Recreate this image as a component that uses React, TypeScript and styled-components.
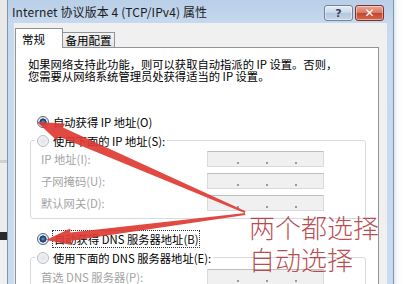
import React from "react";
import styled, { createGlobalStyle } from "styled-components";

const Global = createGlobalStyle`
  html, body { margin: 0; padding: 0; background: #ffffff; }
  body { width: 403px; height: 284px; overflow: hidden; }
`;

const UI_FONT = `"Noto Sans CJK SC", "Noto Sans", sans-serif`;

const Screen = styled.div`
  position: relative;
  width: 403px;
  height: 284px;
  overflow: hidden;
  display: flex;
  font-family: ${UI_FONT};
`;

const DesktopEdge = styled.div<{ $side: "left" | "right" }>`
  flex: none;
  width: ${(p) => (p.$side === "left" ? 7 : 9)}px;
  background: ${(p) =>
    p.$side === "left"
      ? "linear-gradient(#e9e9e9 0 160px, #cfcfcf 160px 163px, #ececec 163px 232px, #2a2a2a 232px 240px, #f0f0f0 240px)"
      : "linear-gradient(90deg, #dfe6ee, #f8fafc 3px, #ffffff)"};
`;

const Window = styled.div`
  flex: none;
  width: 387px;
  box-sizing: border-box;
  display: flex;
  flex-direction: column;
  background: linear-gradient(#b9cfe8, #c7d9ee 24px, #c9dbef);
  border-left: 1px solid #7f95ae;
  border-right: 1px solid #7f95ae;
`;

const TitleBar = styled.div`
  flex: none;
  height: 23px;
  display: flex;
  align-items: center;
  padding: 0 9px 0 4px;
`;

const Title = styled.span`
  font-size: 12px;
  color: #1b1b1b;
  white-space: nowrap;
  letter-spacing: 0.1px;
`;

const CaptionButtons = styled.div`
  margin-left: auto;
  display: flex;
  gap: 2px;
  align-self: flex-start;
  margin-top: 5px;
`;

const CaptionButton = styled.div<{ $kind: "help" | "close" }>`
  width: 29px;
  height: 16px;
  box-sizing: border-box;
  border-radius: 3px;
  display: flex;
  align-items: center;
  justify-content: center;
  font-family: "DejaVu Sans", sans-serif;
  font-weight: bold;
  font-size: ${(p) => (p.$kind === "help" ? 11 : 12)}px;
  line-height: 1;
  border: 1px solid ${(p) => (p.$kind === "help" ? "#70839c" : "#7d3024")};
  color: ${(p) => (p.$kind === "help" ? "#2d4463" : "#ffffff")};
  background: ${(p) =>
    p.$kind === "help"
      ? "linear-gradient(#e6eef7, #c9d7e7 50%, #b4c6dc 51%, #c6d6e8)"
      : "linear-gradient(#eaa692, #d77763 50%, #c2442d 51%, #d4694f)"};
  box-shadow: inset 0 0 0 1px rgba(255, 255, 255, 0.45);
`;

const Client = styled.div`
  flex: 1;
  min-height: 0;
  margin: 0 6px;
  background: #f0f0f0;
  padding: 5px 8px 0 1px;
  display: flex;
  flex-direction: column;
`;

const TabRow = styled.div`
  flex: none;
  height: 20px;
  display: flex;
  align-items: flex-end;
  position: relative;
  z-index: 1;
`;

const Tab = styled.div<{ $active?: boolean }>`
  box-sizing: border-box;
  display: flex;
  align-items: center;
  font-size: 11.5px;
  color: #000;
  white-space: nowrap;
  border: 1px solid #8e9299;
  border-bottom: none;
  ${(p) =>
    p.$active
      ? `width: 48px; height: 20px; padding-left: 6px; background: #ffffff;`
      : `width: 53px; height: 15px; margin-bottom: 1px; margin-left: -1px; justify-content: center; background: linear-gradient(#f3f3f3, #e3e3e3);`}
`;

const Panel = styled.div`
  flex: 1;
  margin-top: -1px;
  background: #ffffff;
  border: 1px solid #8e9299;
  border-bottom: none;
  padding: 11px 0 0 12px;
  font-size: 11.3px;
  color: #000;
`;

const Intro = styled.p`
  margin: 0;
  line-height: 11.5px;
  white-space: nowrap;
`;

const IntroLine = styled.span`
  display: block;
`;

const OptionRow = styled.div<{ $gap: number }>`
  display: flex;
  align-items: center;
  height: 19px;
  margin-top: ${(p) => p.$gap}px;
  padding-left: 9px;
  gap: 4px;
  white-space: nowrap;
`;

const Radio = styled.span<{ $checked?: boolean }>`
  flex: none;
  width: 12px;
  height: 12px;
  box-sizing: border-box;
  border-radius: 50%;
  border: 1px solid ${(p) => (p.$checked ? "#55657a" : "#b7bcc4")};
  background: ${(p) =>
    p.$checked
      ? "radial-gradient(circle at 50% 50%, #6e97c9 0, #22558f 2px, #133660 3.3px, #e2e6ec 3.8px, #f8f9fb 100%)"
      : "radial-gradient(circle, #dfe2e6 0, #eef0f2 60%, #f9fafb 100%)"};
`;

const Focused = styled.span`
  outline: 1px dotted #333;
  outline-offset: 0;
  padding: 0 1px;
`;

const Group = styled.fieldset<{ $pad: number }>`
  margin: 0 0 0 2px;
  width: 336px;
  box-sizing: border-box;
  border: 1px solid #d6dbe0;
  border-radius: 3px;
  padding: 0 0 ${(p) => p.$pad}px 10px;
  min-width: 0;
`;

const GroupLegend = styled.legend`
  margin-left: -6px;
  padding: 0 2px;
  height: 19px;
  display: flex;
  align-items: center;
  gap: 4px;
  white-space: nowrap;
  font-size: 11.3px;
`;

const Fields = styled.div<{ $shift: number }>`
  margin-top: ${(p) => p.$shift}px;
`;

const FieldRow = styled.div`
  height: 22px;
  display: flex;
  align-items: center;
`;

const FieldLabel = styled.span`
  width: 166px;
  flex: none;
  color: #a3a3a3;
  white-space: nowrap;
`;

const IpBox = styled.div`
  width: 117px;
  height: 16px;
  box-sizing: border-box;
  border: 1px solid #dadada;
  border-top-color: #bfbfbf;
  background: #f0f0f0;
  display: flex;
  align-items: flex-end;
  padding: 0 0 2px 29px;
  gap: 27px;
`;

const Dot = styled.span`
  width: 2px;
  height: 2px;
  background: #9a9a9a;
`;

const Annotation = styled.div`
  position: absolute;
  left: 249px;
  top: 211px;
  font-family: ${UI_FONT};
  font-size: 26px;
  line-height: 32px;
  font-weight: 300;
  color: rgba(176, 52, 58, 0.88);
  white-space: nowrap;
  pointer-events: none;
`;

const ArrowLayer = styled.svg`
  position: absolute;
  left: 0;
  top: 0;
  width: 403px;
  height: 284px;
  pointer-events: none;
`;

const IpInput = () => (
  <IpBox>
    <Dot />
    <Dot />
    <Dot />
  </IpBox>
);

export default function App() {
  return (
    <Screen>
      <Global />
      <DesktopEdge $side="left" />
      <Window>
        <TitleBar>
          <Title>Internet 协议版本 4 (TCP/IPv4) 属性</Title>
          <CaptionButtons>
            <CaptionButton $kind="help">?</CaptionButton>
            <CaptionButton $kind="close">✕</CaptionButton>
          </CaptionButtons>
        </TitleBar>
        <Client>
          <TabRow>
            <Tab $active>常规</Tab>
            <Tab>备用配置</Tab>
          </TabRow>
          <Panel>
            <Intro>
              <IntroLine>如果网络支持此功能，则可以获取自动指派的 IP 设置。否则，</IntroLine>
              <IntroLine>您需要从网络系统管理员处获得适当的 IP 设置。</IntroLine>
            </Intro>
            <OptionRow $gap={30}>
              <Radio $checked />
              <span>自动获得 IP 地址(O)</span>
            </OptionRow>
            <Group $pad={4}>
              <GroupLegend>
                <Radio />
                <span>使用下面的 IP 地址(S):</span>
              </GroupLegend>
              <Fields $shift={-2}>
                <FieldRow>
                  <FieldLabel>IP 地址(I):</FieldLabel>
                  <IpInput />
                </FieldRow>
                <FieldRow>
                  <FieldLabel>子网掩码(U):</FieldLabel>
                  <IpInput />
                </FieldRow>
                <FieldRow>
                  <FieldLabel>默认网关(D):</FieldLabel>
                  <IpInput />
                </FieldRow>
              </Fields>
            </Group>
            <OptionRow $gap={10}>
              <Radio $checked />
              <Focused>自动获得 DNS 服务器地址(B)</Focused>
            </OptionRow>
            <Group $pad={4}>
              <GroupLegend>
                <Radio />
                <span>使用下面的 DNS 服务器地址(E):</span>
              </GroupLegend>
              <Fields $shift={-1}>
                <FieldRow>
                  <FieldLabel>首选 DNS 服务器(P):</FieldLabel>
                  <IpInput />
                </FieldRow>
              </Fields>
            </Group>
          </Panel>
        </Client>
      </Window>
      <DesktopEdge $side="right" />
      <ArrowLayer viewBox="0 0 403 284">
        <polygon
          points="37,122 65,123.5 63,127.6 245.6,211.2 244.6,213.1 58.6,136.4 56.8,140.5"
          fill="#dd3b33"
          fillOpacity="0.92"
        />
        <polygon
          points="46,240 70.2,228.6 70.4,232.6 245.1,212.9 245.3,215 71.3,240.8 71.4,244.9"
          fill="#dd3b33"
          fillOpacity="0.92"
        />
      </ArrowLayer>
      <Annotation>
        两个都选择
        <br />
        自动选择
      </Annotation>
    </Screen>
  );
}
